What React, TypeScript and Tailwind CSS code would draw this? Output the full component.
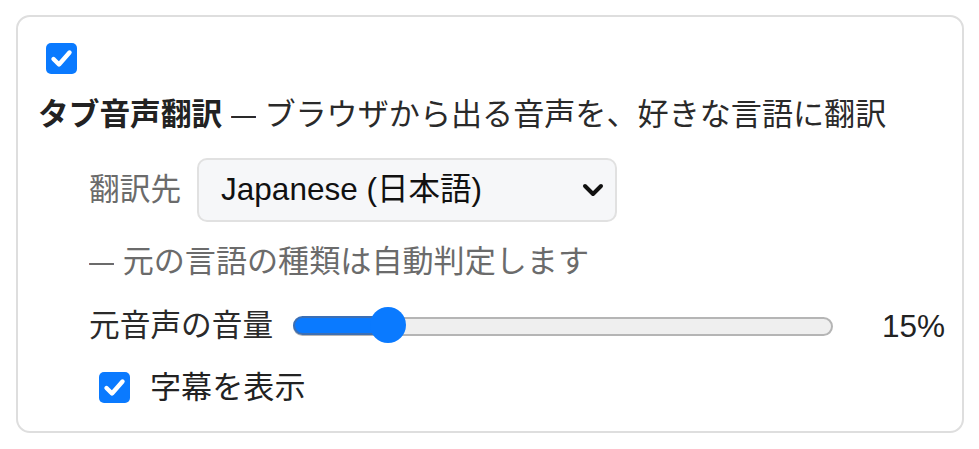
import React from "react";

const Check = () => (
  <div className="flex items-center justify-center rounded-[5px] bg-[#0a7aff] w-[31px] h-[31px]">
    <svg width="31" height="31" viewBox="0 0 31 31">
      <path d="M7.5 16 L13 21.5 L23.5 9.5" fill="none" stroke="#fff" strokeWidth="4.4" strokeLinecap="round" strokeLinejoin="round" />
    </svg>
  </div>
);

const Dash = () => (
  <span className="inline-block w-[25px] overflow-hidden align-top">
    <span className="inline-block origin-left scale-x-[0.81]">—</span>
  </span>
);

export default function App() {
  const font = { fontFamily: '"Liberation Sans", "Noto Sans CJK JP", sans-serif' };
  return (
    <div className="w-[979px] h-[449px] bg-white pt-[15px] pl-[16px]" style={font}>
      <div className="w-[948px] h-[418px] border-2 border-[#dedede] rounded-[14px] flex flex-col pl-[20px] text-[31.1px] text-[#222]">
        <div className="mt-[26px] ml-[8px]">
          <Check />
        </div>
        <div className="mt-[21px] h-[40px] leading-[40px] whitespace-nowrap">
          <span className="font-bold text-[#222] text-[30.7px]">タブ音声翻訳</span>
          <span className="text-[#2a2a2a]"> <Dash /> ブラウザから出る音声を、好きな言語に翻訳</span>
        </div>
        <div className="mt-[23px] flex items-center pl-[51px] h-[64px]">
          <span className="text-[#6b6b6b] leading-[40px] text-[30.7px]">翻訳先</span>
          <div className="ml-[16px] w-[420px] h-[64px] rounded-[10px] border-2 border-[#e1e1e1] bg-[#f6f7f9] flex items-center justify-between pl-[22px] pr-[10px]">
            <span className="text-[#111] text-[31.5px]">Japanese (日本語)</span>
            <svg width="22" height="14" viewBox="0 0 22 14" className="mr-[1px]">
              <path d="M3 3 L11 11 L19 3" fill="none" stroke="#111" strokeWidth="4" strokeLinecap="round" strokeLinejoin="round" />
            </svg>
          </div>
        </div>
        <div className="mt-[20px] h-[40px] leading-[40px] pl-[51px] text-[#6b6b6b] whitespace-nowrap">
          <Dash /> 元の言語の種類は自動判定します
        </div>
        <div className="mt-[24px] h-[40px] flex items-center pl-[51px]">
          <span className="leading-[40px] text-[#2a2a2a] w-[204px] whitespace-nowrap text-[30.7px]">元音声の音量</span>
          <div className="relative w-[540px] h-[40px] flex items-center">
            <div className="w-full h-[19px] rounded-full border-2 border-[#b5b5b5] bg-[#efefef]" />
            <div className="absolute left-0 top-[10px] w-[96px] h-[19px] rounded-full border-2 border-[#3c6fb4] bg-[#0a7aff]" />
            <div className="absolute left-[77px] top-[1px] w-[36px] h-[36px] rounded-full bg-[#0a7aff]" />
          </div>
          <span className="ml-[49px] leading-[40px] text-[#222] text-[31.5px]">15%</span>
        </div>
        <div className="mt-[26px] flex items-center pl-[61px]">
          <Check />
          <span className="ml-[20px] leading-[31px] text-[#222]">字幕を表示</span>
        </div>
      </div>
    </div>
  );
}
